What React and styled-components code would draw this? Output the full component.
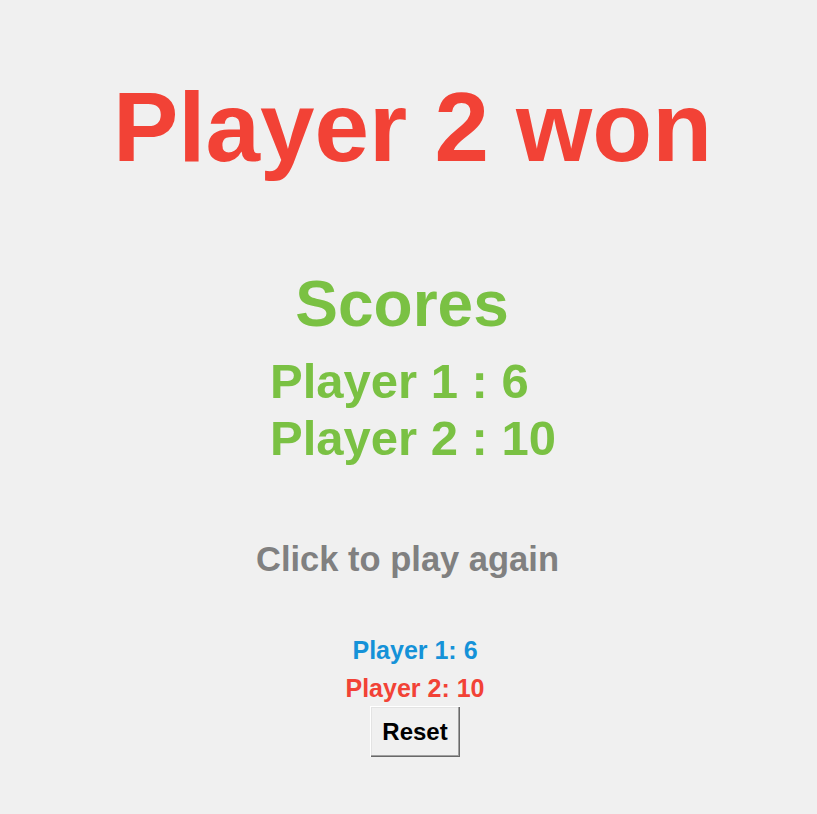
import React from "react";
import styled, { createGlobalStyle } from "styled-components";

const Global = createGlobalStyle`
  html, body {
    margin: 0;
    padding: 0;
    background: #f0f0f0;
  }
  body {
    font-family: "Liberation Sans", Arial, sans-serif;
  }
`;

const Page = styled.main`
  width: 817px;
  min-height: 814px;
  box-sizing: border-box;
  padding-top: 71px;
  display: flex;
  flex-direction: column;
  align-items: center;
  font-family: "Liberation Sans", Arial, sans-serif;
  font-weight: 700;
`;

const Heading = styled.h1`
  margin: ${(p) => p.$top || 0}px 0 0 ${(p) => p.$shift * 2}px;
  font-size: ${(p) => p.$size}px;
  line-height: ${(p) => p.$lh}px;
  color: ${(p) => p.$color};
  font-weight: 700;
  white-space: pre;
`;

const ScoreBlock = styled.div`
  margin-top: 12px;
  margin-left: ${(p) => p.$shift * 2}px;
  display: flex;
  flex-direction: column;
  align-items: flex-start;
  font-size: 49px;
  line-height: 57px;
  color: #7ac143;
  white-space: pre;
`;

const Prompt = styled.p`
  margin: ${(p) => p.$top}px 0 0 ${(p) => p.$shift * 2}px;
  font-size: 34.5px;
  line-height: 40px;
  color: #808080;
  cursor: pointer;
`;

const Footer = styled.section`
  margin-top: 57px;
  margin-left: 13px;
  display: flex;
  flex-direction: column;
  align-items: center;
`;

const Tally = styled.div`
  font-size: 25px;
  line-height: 29px;
  color: ${(p) => p.$color};
  margin-top: ${(p) => p.$top || 0}px;
`;

const ResetButton = styled.button`
  margin-top: 3px;
  width: 90px;
  height: 51px;
  padding: 0;
  border: none;
  background: #f0f0f0;
  font-family: "Liberation Sans", Arial, sans-serif;
  font-weight: 700;
  font-size: 24px;
  color: #000;
  box-shadow: inset 1px 1px 0 #ffffff, inset -1px -1px 0 #696969,
    inset -2px -2px 0 #a0a0a0, inset 2px 2px 0 #e3e3e3;
  cursor: pointer;
`;

export default function App() {
  return (
    <>
      <Global />
      <Page>
        <Heading $size={98} $lh={113} $color="#f24236" $shift={4}>
          Player 2 won
        </Heading>
        <Heading $size={64} $lh={74} $color="#7ac143" $shift={-6.5} $top={83}>
          Scores
        </Heading>
        <ScoreBlock $shift={4.5}>
          <span>Player 1 : 6</span>
          <span>Player 2 : 10</span>
        </ScoreBlock>
        <Prompt $top={72} $shift={-1}>
          Click to play again
        </Prompt>
        <Footer>
          <Tally $color="#1592d8">Player 1: 6</Tally>
          <Tally $color="#f24236" $top={9}>
            Player 2: 10
          </Tally>
          <ResetButton>Reset</ResetButton>
        </Footer>
      </Page>
    </>
  );
}
